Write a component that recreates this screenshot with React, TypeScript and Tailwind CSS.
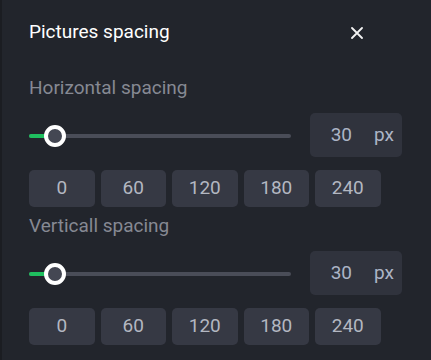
const presets = [0, 60, 120, 180, 240]

function SpacingControl({ label, value }: { label: string; value: number }) {
    const pct = 10
    return (
        <div className="flex flex-col">
            <div className="h-[24px] leading-[24px] text-[19px] text-[#868993]">
                {label}
            </div>
            <div className="mt-[13px] flex items-center gap-[19px]">
                <div className="relative h-[44px] w-[262px]">
                    <div className="absolute top-[21px] left-0 right-0 h-[4px] rounded-full bg-[#4a4d58]" />
                    <div
                        className="absolute top-[21px] left-0 h-[4px] rounded-full bg-[#1fbf5f]"
                        style={{ width: pct + "%" }}
                    />
                    <div
                        className="absolute top-[12px] h-[22px] w-[22px] rounded-full border-[4px] border-white bg-[#444753]"
                        style={{ left: 15 }}
                    />
                </div>
                <div className="flex h-[44px] w-[92px] items-center rounded-[5px] bg-[#30333d] text-[19px] text-[#acb5c6]">
                    <span className="w-[42px] text-right">{value}</span>
                    <span className="ml-[22px]">px</span>
                </div>
            </div>
            <div className="mt-[13px] flex gap-[6px]">
                {presets.map((p) => (
                    <button
                        key={p}
                        className="flex h-[37px] w-[65.5px] items-center justify-center rounded-[5px] bg-[#363944] text-[19px] text-[#b3b7c1]"
                    >
                        {p}
                    </button>
                ))}
            </div>
        </div>
    )
}

export default function App() {
    return (
        <div
            className="h-[360px] w-[431px] overflow-hidden border-l-2 border-[#1b1d22] bg-[#22252c]"
            style={{ fontFamily: "Roboto, 'Liberation Sans', sans-serif" }}
        >
            <div className="flex h-[64px] items-center pl-[27px] pr-[68px] justify-between">
                <div className="text-[19px] font-normal text-white">Pictures spacing</div>
                <svg width="12" height="12" viewBox="0 0 12 12" className="mt-[1px]">
                    <path d="M1 1 L11 11 M11 1 L1 11" stroke="#f2f2f2" strokeWidth="1.8" strokeLinecap="round" />
                </svg>
            </div>
            <div className="mt-[12px] flex flex-col gap-[7px] pl-[27px]">
                <SpacingControl label="Horizontal spacing" value={30} />
                <SpacingControl label="Verticall spacing" value={30} />
            </div>
        </div>
    )
}
